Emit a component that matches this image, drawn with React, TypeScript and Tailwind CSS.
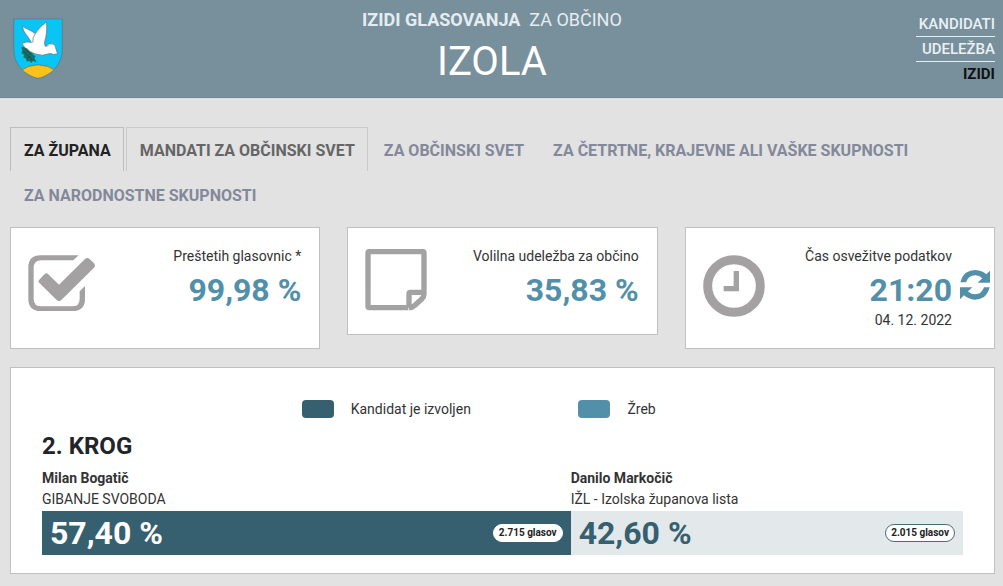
import type { ReactNode } from "react";

const tabs = [
  { label: "ZA ŽUPANA", style: "border-[#bdbdbd] text-[#222222]" },
  { label: "MANDATI ZA OBČINSKI SVET", style: "border-[#cacaca] text-[#666666]" },
  { label: "ZA OBČINSKI SVET", style: "border-transparent text-[#83889a]" },
  { label: "ZA ČETRTNE, KRAJEVNE ALI VAŠKE SKUPNOSTI", style: "border-transparent text-[#83889a]" },
  { label: "ZA NARODNOSTNE SKUPNOSTI", style: "border-transparent text-[#83889a]" },
];

const candidates = [
  {
    name: "Milan Bogatič",
    party: "GIBANJE SVOBODA",
    share: 57.4,
    percent: "57,40 %",
    votes: "2.715 glasov",
    bar: "bg-[#365f70] text-white",
    badge: "border-white",
  },
  {
    name: "Danilo Markočič",
    party: "IŽL - Izolska županova lista",
    share: 42.6,
    percent: "42,60 %",
    votes: "2.015 glasov",
    bar: "bg-[#e3e9eb] text-[#365f70]",
    badge: "border-[#4c6c7a]",
  },
];

export default function App() {
  return (
    <div className="min-h-screen bg-[#e2e2e2] pb-3 font-['Roboto','Liberation_Sans',sans-serif] text-[#333333]">
      <Header />
      <main className="pr-2 pl-[10px]">
        <nav className="flex flex-wrap gap-x-[2px] gap-y-px pt-[29px]">
          {tabs.map((tab) => (
            <a
              key={tab.label}
              href="#"
              className={`border border-b-0 pt-[11px] pr-3 pb-2 pl-[13px] text-base leading-6 font-bold ${tab.style}`}
            >
              {tab.label}
            </a>
          ))}
        </nav>

        <section className="mt-[11px] grid grid-cols-3 items-start gap-[27px]">
          <StatCard icon={<CheckIcon />} label="Preštetih glasovnic *" value="99,98 %" className="pr-[18px] pb-9" />
          <StatCard icon={<NoteIcon />} label="Volilna udeležba za občino" value="35,83 %" className="pr-[18px] pb-[22px]" />
          <StatCard
            icon={<ClockIcon />}
            label="Čas osvežitve podatkov"
            value="21:20"
            note="04. 12. 2022"
            className="pr-1 pb-5"
            action={
              <button type="button" aria-label="Osveži" className="mt-6 ml-2 shrink-0">
                <RefreshIcon />
              </button>
            }
          />
        </section>

        <Results />
      </main>
    </div>
  );
}

function Header() {
  return (
    <header className="grid grid-cols-[29fr_auto_31fr] items-start border-b border-[#71848f] bg-[#788f9c] pr-2 pl-[13px] text-white">
      <div className="pt-[18px]">
        <Crest />
      </div>
      <div className="pt-2 pb-[5px] text-center">
        <p className="text-lg leading-6 text-[#e4edf2]">
          <b>IZIDI GLASOVANJA</b>&nbsp; ZA OBČINO
        </p>
        <h1 className="text-[40px] leading-15">IZOLA</h1>
      </div>
      <nav className="flex w-[79px] flex-col justify-self-end pt-3 text-right text-[15px] leading-6 font-medium">
        <a href="#" className="border-b border-[#e4edf2] text-[#e9f1f5]">KANDIDATI</a>
        <a href="#" className="border-b border-[#e4edf2] text-[#e9f1f5]">UDELEŽBA</a>
        <a href="#" className="font-bold text-[#111111]">IZIDI</a>
      </nav>
    </header>
  );
}

type StatCardProps = {
  icon: ReactNode;
  label: string;
  value: string;
  note?: string;
  action?: ReactNode;
  className: string;
};

function StatCard({ icon, label, value, note, action, className }: StatCardProps) {
  return (
    <div className={`flex items-start border border-[#c0c0c0] bg-white pt-[18px] pl-[17px] ${className}`}>
      {icon}
      <div className="flex-1 text-right whitespace-nowrap">
        <div className="text-sm leading-5">{label}</div>
        <div className="mt-[2px] text-[32px] leading-11 font-bold text-[#5290aa]">{value}</div>
        {note && <div className="text-sm leading-4">{note}</div>}
      </div>
      {action}
    </div>
  );
}

function Results() {
  return (
    <section className="mt-[18px] border border-[#c0c0c0] bg-white px-[31px] pt-[31px] pb-[18px]">
      <div className="grid grid-cols-[260fr_277fr_385fr] text-sm leading-5">
        <div className="col-start-2 flex items-center gap-[17px]">
          <span className="h-[18px] w-8 rounded bg-[#365f70]" />
          Kandidat je izvoljen
        </div>
        <div className="flex items-center gap-[17px]">
          <span className="h-[18px] w-8 rounded bg-[#5290aa]" />
          Žreb
        </div>
      </div>
      <h2 className="mt-[11px] text-2xl leading-8 font-bold text-[#212529]">2. KROG</h2>
      <div className="mt-[6px] flex">
        {candidates.map((c) => (
          <div key={c.name} style={{ width: `${c.share}%` }}>
            <div className="text-sm leading-[21px] font-bold">{c.name}</div>
            <div className="text-sm leading-[21px]">{c.party}</div>
            <div className={`mt-px flex h-11 items-center justify-between px-2 ${c.bar}`}>
              <span className="text-[32px] leading-11 font-bold">{c.percent}</span>
              <span className={`rounded-full border bg-white px-[5px] text-[10px] leading-4 font-bold text-[#222222] ${c.badge}`}>
                {c.votes}
              </span>
            </div>
          </div>
        ))}
      </div>
    </section>
  );
}

function Crest() {
  return (
    <svg viewBox="40 54 150 184" className="h-[61px] w-[50px]" role="img" aria-label="Grb občine Izola">
      <clipPath id="shield">
        <path d="M42 57H188V150C188 192 158 226 115 236C72 226 42 192 42 150Z" />
      </clipPath>
      <g clipPath="url(#shield)">
        <path d="M40 54H190V238H40Z" fill="#08c5f5" />
        <path d="M60 214Q115 176 172 214L150 240H80Z" fill="#fcc21a" stroke="#55635c" strokeWidth="2" />
      </g>
      <path d="M64 142L78 139L92 150L100 164L108 170L104 174L111 188L99 183L96 190L89 184L81 185L79 176L71 173L73 165L65 160L68 152Z" fill="#167064" />
      <path d="M75 145L92 164M70 153L99 182M80 176L93 170" fill="none" stroke="#0b4850" strokeWidth="2" />
      <path
        d="M68 79L96 94L107 101Q119 80 141 66Q143 101 136 121Q133 132 137 139Q145 130 158 132Q168 134 168 144L174 162L162 164Q153 160 147 162Q129 170 109 163Q89 157 82 147Q71 143 68 132Q76 123 95 128Q90 117 77 101Q70 92 68 79Z"
        fill="#ffffff"
        stroke="#536c76"
        strokeWidth="2"
      />
      <path d="M107 101Q98 112 99 128M137 139Q143 140 147 136" fill="none" stroke="#536c76" strokeWidth="2" />
      <path d="M42 57H188V150C188 192 158 226 115 236C72 226 42 192 42 150Z" fill="none" stroke="#5d7380" strokeWidth="2" />
    </svg>
  );
}

function CheckIcon() {
  return (
    <svg viewBox="84 105 204 168" className="mt-[9px] h-14 w-[68px] shrink-0" aria-hidden="true">
      <path
        d="M236 106L220 121H124Q101 121 101 144V236Q101 259 124 259H217Q239 259 239 236V214L255 198V236Q255 273 218 273H122Q85 273 85 236V143Q85 106 122 106Z"
        fill="#a3a1a1"
      />
      <path
        d="M116 187Q114 183 118 179L134 162Q139 157 144 162L177 194L255 117Q262 111 269 117L282 130Q288 137 282 143L184 240Q177 247 170 240Z"
        fill="#a3a1a1"
      />
    </svg>
  );
}

function NoteIcon() {
  return (
    <svg viewBox="76 87 186 186" className="mt-[3px] h-[62px] w-[62px] shrink-0" aria-hidden="true">
      <path
        d="M253 217V99Q253 95 249 95H89Q85 95 85 99V259Q85 263 89 263H206M253 217H212Q208 217 208 221V263M253 217V222Q253 230 247 236L224 257Q218 263 208 263"
        fill="none"
        stroke="#a3a3a3"
        strokeWidth="16"
        strokeLinejoin="round"
      />
    </svg>
  );
}

function ClockIcon() {
  return (
    <svg viewBox="98 105 186 186" className="mt-[9px] h-[62px] w-[62px] shrink-0" aria-hidden="true">
      <circle cx="191" cy="198" r="79" fill="none" stroke="#a3a1a1" strokeWidth="27" />
      <path d="M198 153V206H160" fill="none" stroke="#a3a1a1" strokeWidth="16" />
    </svg>
  );
}

function RefreshIcon() {
  return (
    <svg viewBox="868 146 90 90" className="h-[30px] w-[30px]" fill="#5290aa" aria-hidden="true">
      <path d="M869 183Q874 164 886 154Q899 146 914 146Q934 147 947 159L958 148V184H921L935 171Q926 162 914 162Q893 162 886 183Z" />
      <path d="M957 198Q952 217 940 227Q927 235 913 235Q893 234 880 222L868 234V198H905L892 210Q900 219 913 219Q933 219 940 198Z" />
    </svg>
  );
}
